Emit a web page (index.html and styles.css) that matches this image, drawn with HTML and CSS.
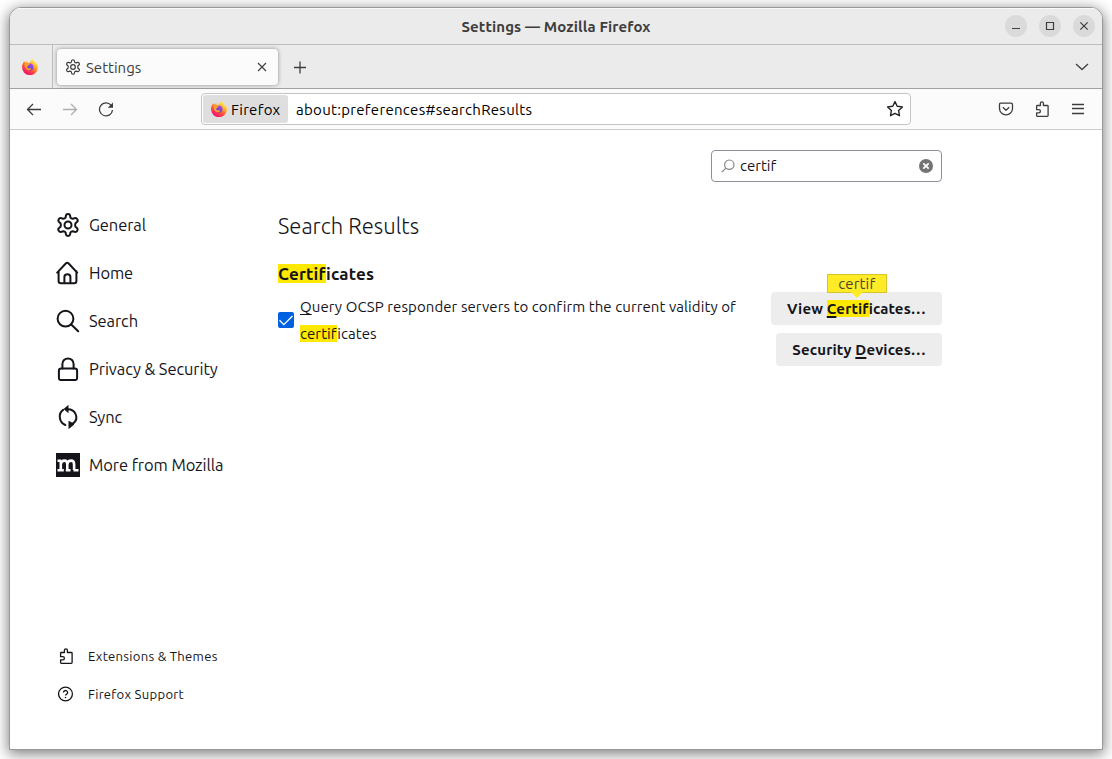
FILE: index.html
```html
<!DOCTYPE html>
<html lang="en">
<head>
<meta charset="utf-8">
<title>Settings</title>
<link rel="stylesheet" href="styles.css">
</head>
<body>
<svg class="defs" width="0" height="0">
  <defs>
    <linearGradient id="flame" x1="0.85" y1="0.05" x2="0.25" y2="1">
      <stop offset="0.05" stop-color="#fff44f"/><stop offset="0.35" stop-color="#ffb12c"/><stop offset="0.6" stop-color="#ff5634"/><stop offset="0.9" stop-color="#f5156c"/>
    </linearGradient>
    <linearGradient id="globe" x1="0.8" y1="0" x2="0.3" y2="1">
      <stop offset="0" stop-color="#b24cf0"/><stop offset="1" stop-color="#4b3fd0"/>
    </linearGradient>
    <symbol id="firefox" viewBox="0 0 16 16">
      <path fill="url(#flame)" d="M15.4 5.6c-.35-.85-1.05-1.75-1.6-2.05.45.9.7 1.75.8 2.4C13.7 3.7 12.1 2.8 10.9.8 10.6.4 10.6.2 10.5 0 9 .9 8.2 2.5 8.1 3.4c-1 .05-1.5.3-2.1.6C5.2 3.5 5.2 2.6 5.3 2.1 4.5 2.500 3.900 3.100 3.500 3.600 3.100 3.500 2.700 3.300 2.300 2.100 1.700 2.800 1.200 3.500.9 4.400.2 5.600.1 7 .1 8a7.900 7.900 0 0 0 15.800.600c.1-1.100-.1-2.200-.5-3z"/>
      <circle cx="8" cy="7.900" r="3.500" fill="url(#globe)"/>
      <path fill="#ff9f2e" d="M2.300 4.800c1-.900 2.800-1 3.800-.2.800 0 1.800.1 2 .5-.1.500-1.200.700-1.600 1-.3.300 0 1-.9 1.200-.6.500-.5 1.200.1 1.700 1.300 1 2.500 0 3.500.3.300.2.200.6-.2.900-1.100 1.300-3.600 1.400-4.800-.1C3 8.800 2.300 6.500 2.300 4.800z"/>
    </symbol>
    <symbol id="gear" viewBox="0 0 24 24">
      <g fill="none" stroke="currentColor" stroke-linejoin="round">
        <circle cx="12" cy="12" r="3.500"/>
        <path d="M9.900 2.600Q10.100 1.100 12 1.100T14.100 2.600L14.400 4.500Q15.200 5.900 16.800 5.800L18.700 5.100Q20.300 4.600 21.300 6.300T21 8.900L19.500 10.200Q18.700 12 19.500 13.800L21 15.100Q22.200 16.100 21.300 17.700T18.700 18.900L16.800 18.200Q15.200 18.100 14.400 19.500L14.100 21.400Q13.900 22.900 12 22.900T9.900 21.400L9.600 19.500Q8.800 18.100 7.200 18.200L5.300 18.900Q3.700 19.400 2.700 17.700T3 15.100L4.500 13.800Q5.300 12 4.500 10.200L3 8.900Q1.800 7.900 2.700 6.300T5.300 5.100L7.200 5.800Q8.800 5.900 9.600 4.500Z"/>
      </g>
    </symbol>
    <symbol id="puzzle" viewBox="0 0 16 16">
      <path fill="none" stroke="currentColor" stroke-width="1.300" stroke-linejoin="round" d="M2.600 7V5.300q0-.8.800-.8h3V2.300a1.500 1.500 0 0 1 3 0v2.200h3.900q.8 0 .8.800v9.200q0 .8-.8.800H3.400q-.8 0-.8-.8v-2.600h2.200a1.450 1.450 0 0 0 0-3.200H2.600z"/>
    </symbol>
  </defs>
</svg>

<div class="window">
  <header class="titlebar">
    <div class="title">Settings — Mozilla Firefox</div>
    <div class="controls">
      <span class="control"><svg width="22" height="22" viewBox="0 0 22 22"><path d="M7 13.500h8"/></svg></span>
      <span class="control"><svg width="22" height="22" viewBox="0 0 22 22"><path d="M7.500 7.500h7v7h-7z"/></svg></span>
      <span class="control"><svg width="22" height="22" viewBox="0 0 22 22"><path d="M7.300 7.300l7.400 7.400M14.700 7.300l-7.400 7.400"/></svg></span>
    </div>
  </header>

  <nav class="tabs">
    <div class="pinned"><svg width="16" height="16"><use href="#firefox"/></svg></div>
    <div class="tab">
      <svg class="tab-gear" width="16" height="16"><use href="#gear"/></svg>
      <span class="tab-label">Settings</span>
      <svg class="line thin" width="10" height="10" viewBox="0 0 10 10"><path d="M1 1l8 8M9 1L1 9"/></svg>
    </div>
    <svg class="line new-tab" width="14" height="14" viewBox="0 0 14 14"><path d="M1 7.500h12M7 1.500v12"/></svg>
    <svg class="line all-tabs" width="14" height="8" viewBox="0 0 14 8"><path d="M1 1l6 5.500L13 1"/></svg>
  </nav>

  <div class="toolbar">
    <div class="history">
      <svg class="line" width="16" height="16" viewBox="0 0 16 16"><path d="M15 8.500H1.500M7 3L1.500 8.500 7 14"/></svg>
      <svg class="line faded" width="16" height="16" viewBox="0 0 16 16"><path d="M1 8.500h13.500M9 3l5.500 5.500L9 14"/></svg>
      <svg class="line reload" width="16" height="16" viewBox="0 0 16 16"><path d="M13 4.200A6.500 6.500 0 1 0 14.500 9"/><path class="solid" d="M15 1.500v5.300H9.700z"/></svg>
    </div>
    <div class="urlbar">
      <span class="identity"><svg width="16" height="16"><use href="#firefox"/></svg><span class="identity-label">Firefox</span></span>
      <span class="url">about:preferences#searchResults</span>
      <svg class="line star" width="18" height="18" viewBox="0 0 18 18"><path d="M9 1.600l2.200 4.600 5.200.7-3.800 3.600.9 5.200L9 13.300l-4.500 2.400.9-5.200L1.600 6.900l5.200-.7z"/></svg>
    </div>
    <div class="actions">
      <svg class="line" width="16" height="16" viewBox="0 0 16 16"><path d="M2.800 2.200h10.400q1.300 0 1.300 1.300v4a6.500 6.300 0 0 1-13 0v-4q0-1.300 1.300-1.300zM4.800 6.300L8 9.300l3.200-3"/></svg>
      <svg width="16" height="16"><use href="#puzzle"/></svg>
      <svg class="line" width="14" height="14" viewBox="0 0 14 14"><path d="M1 2.500h12M1 6.500h12M1 11.500h12"/></svg>
    </div>
  </div>

  <div class="page">
    <aside class="sidebar">
      <ul class="categories">
        <li><svg class="icon gear" width="24" height="24"><use href="#gear"/></svg>General</li>
        <li><svg class="icon" width="24" height="24" viewBox="0 0 24 24"><path d="M1.200 11.600L10 2.300q1.200-1 2.400 0l8.800 9.300M2.600 10.300V20q0 2.300 2.300 2.300h13.200q2.300 0 2.300-2.300v-9.700M8.400 22v-6q0-2.700 3-2.700t3 2.700v6"/></svg>Home</li>
        <li><svg class="icon" width="24" height="24" viewBox="0 0 24 24"><circle cx="9.500" cy="9.700" r="7.900"/><path d="M15.200 15.500l7 6.800"/></svg>Search</li>
        <li><svg class="icon" width="24" height="24" viewBox="0 0 24 24"><rect x="2.900" y="11.500" width="18.200" height="11.600" rx="2.200"/><path d="M6.400 11.500V7a5.600 5.600 0 0 1 11.200 0v4.500"/></svg>Privacy &amp; Security</li>
        <li><svg class="icon" width="24" height="24" viewBox="0 0 24 24"><path d="M7.200 4.800c-5.200 3.500-4.500 12.500 2.100 15.200M11 4.200c9.300-.4 12 9.800 6.300 14"/><path class="solid" d="M12.500-.2v8.400L7.600 4zM12.500 15.800v8.400l5.200-4.200 1-2.400-2.700-.2z"/></svg>Sync</li>
        <li><svg class="mozilla" width="24" height="24" viewBox="0 0 24 24"><path class="tile" d="M0 0h24v24H0z"/><path class="mark" d="M1.500 7.700h3.700M1.500 17.200h6.300M4.800 17V7.200M4.800 11.200q.4-3.600 3.700-3.600 2.800 0 2.800 3.600V17M9.800 17.200h4.700M11.300 11.200q.4-3.600 3.700-3.600 3.100 0 3.100 3.600V17M17.500 17.200h5"/></svg>More from Mozilla</li>
      </ul>
      <ul class="links">
        <li><svg width="16" height="16"><use href="#puzzle"/></svg>Extensions &amp; Themes</li>
        <li><svg class="help" width="16" height="16" viewBox="0 0 16 16"><circle cx="7.500" cy="8" r="6.900"/><path d="M5.400 6.500a2.100 2 0 1 1 3.400 1.600q-1.300.7-1.300 1.500"/><circle class="dot" cx="7.500" cy="11.500" r=".8"/></svg>Firefox Support</li>
      </ul>
    </aside>

    <main class="pane">
      <div class="search">
        <svg class="glass" width="14" height="14" viewBox="0 0 14 14"><circle cx="8.300" cy="5.700" r="4.700"/><path d="M4.900 9.100L.8 13.200"/></svg>
        <span class="query">certif</span>
        <svg class="clear" width="14" height="14" viewBox="0 0 14 14"><circle cx="7" cy="7" r="7"/><path d="M4.300 4.300l5.400 5.400M9.700 4.300L4.300 9.700"/></svg>
      </div>
      <h1 class="heading">Search Results</h1>
      <h2 class="group-title"><mark>Certif</mark>icates</h2>
      <div class="group">
        <div class="option">
          <span class="checkbox"><svg width="16" height="16" viewBox="0 0 16 16"><path d="M1.500 8.300l4.300 4.300L14.500 4"/></svg></span>
          <p class="option-text"><u>Q</u>uery OCSP responder servers to confirm the current validity of <mark>certif</mark>icates</p>
        </div>
        <div class="buttons">
          <div class="button">View <span class="hit"><mark><u>C</u>ertif</mark><span class="tooltip">certif</span></span>icates…</div>
          <div class="button">Security <u>D</u>evices…</div>
        </div>
      </div>
    </main>
  </div>
</div>
</body>
</html>
```
FILE: styles.css
```css
* { box-sizing: border-box; }
html, body { height: 100%; }
body {
  margin: 0;
  padding: 7px 9px 9px;
  overflow: hidden;
  background: #fff;
  color: #15141a;
  font: 15px/20px Ubuntu, "Noto Sans", sans-serif;
  font-variant-ligatures: none;
}
.defs { position: absolute; }
svg { display: block; flex: none; }
ul { margin: 0; padding: 0; list-style: none; }
u { text-underline-offset: 2px; text-decoration-thickness: 1px; text-decoration-skip-ink: none; }
mark { background: #ffe900; color: inherit; }

.window {
  display: flex;
  flex-direction: column;
  width: 1094px;
  height: 743px;
  overflow: hidden;
  border: 1px solid #989898;
  border-radius: 12px 12px 0 0;
  background: #fff;
  box-shadow: 0 3px 14px 1px rgba(0, 0, 0, .5);
}

.titlebar {
  display: grid;
  grid-template-columns: 1fr auto 1fr;
  align-items: center;
  flex: none;
  height: 37px;
  border-bottom: 1px solid #bdbdbd;
  background: #ebebeb;
  box-shadow: inset 0 1px #fafafa;
}
.title { grid-column: 2; padding-top: 2px; color: #3d3d3d; font-weight: 700; letter-spacing: .12px; }
.controls { display: flex; justify-content: flex-end; gap: 12px; padding-right: 7px; }
.control { width: 22px; height: 22px; border-radius: 50%; background: #dadada; }
.control path { fill: none; stroke: #3d3d3d; stroke-width: 1.2; }

.tabs {
  display: flex;
  align-items: center;
  flex: none;
  height: 44px;
  padding-right: 13px;
  border-bottom: 1px solid #a1a1a1;
  background: #ebebeb;
}
.pinned {
  display: flex;
  align-items: center;
  justify-content: center;
  width: 43px;
  height: 43px;
  padding-right: 3px;
  border-right: 1px solid #bdbdbd;
}
.tab {
  display: flex;
  align-items: center;
  width: 221px;
  height: 36px;
  margin-left: 4px;
  padding: 0 11px 0 8px;
  border-radius: 4px;
  background: #fbfbfb;
  box-shadow: 0 0 4px rgba(0, 0, 0, .4);
}
.tab-gear { margin-right: 5px; color: #3d3d3d; stroke-width: 1.8px; }
.tab-label { flex: 1; padding-top: 2px; color: #3d3d3d; }
.line { fill: none; stroke: #3d3d3d; stroke-width: 1.3; stroke-linejoin: round; }
.thin { stroke-width: 1.1; }
.solid { fill: currentColor; stroke: none; }
.new-tab { margin-left: 15px; }
.all-tabs { margin-left: auto; }

.toolbar {
  display: flex;
  align-items: center;
  flex: none;
  height: 41px;
  padding: 0 17px 0 16px;
  border-bottom: 1px solid #ccc;
  background: #fbfbfb;
  color: #3d3d3d;
}
.history { display: flex; gap: 20px; width: 175px; }
.faded { opacity: .4; }
.urlbar {
  display: flex;
  align-items: center;
  width: 710px;
  height: 32px;
  padding: 0 6px 0 1px;
  border: 1px solid #c4c4c4;
  border-radius: 4px;
  background: #fff;
  color: #000;
  letter-spacing: .3px;
}
.identity {
  display: flex;
  align-items: center;
  gap: 4px;
  width: 85px;
  height: 28px;
  padding-left: 8px;
  border-radius: 3px;
  background: #dedede;
}
.identity-label { padding-top: 2px; }
.url { flex: 1; padding: 2px 0 0 8px; }
.star { stroke: #222; stroke-width: 1.4; }
.actions { display: flex; align-items: center; gap: 21px; margin-left: auto; }
.actions svg:first-child { margin-right: -1px; }

.page { display: flex; flex: 1; min-height: 0; }
.sidebar {
  display: flex;
  flex-direction: column;
  justify-content: space-between;
  width: 268px;
  padding: 71px 0 36px 46px;
}
.categories li {
  display: flex;
  align-items: center;
  gap: 9px;
  height: 48px;
  font-size: 16.5px;
  letter-spacing: -.09px;
}
.icon { fill: none; stroke: #15141a; stroke-width: 2; stroke-linecap: round; stroke-linejoin: round; }
.icon .solid { stroke: none; }
.tile { fill: #15141a; }
.mark { fill: none; stroke: #fff; stroke-width: 2.6; }
.links li {
  display: flex;
  align-items: center;
  gap: 14px;
  height: 38px;
  padding-left: 2px;
  font-size: 13.1px;
  letter-spacing: .28px;
}
.help { fill: none; stroke: #15141a; stroke-width: 1.3; }
.dot { fill: #15141a; stroke: none; }

.pane { width: 664px; padding-top: 20px; }
.search {
  display: flex;
  align-items: center;
  width: 231px;
  height: 32px;
  margin-left: auto;
  padding: 0 8px 0 9px;
  border: 1px solid #8f8f9d;
  border-radius: 4px;
}
.glass { fill: none; stroke: #85858b; stroke-width: 1.2; }
.query { flex: 1; padding-left: 5px; }
.clear { fill: #737373; }
.clear path { stroke: #fff; stroke-width: 1.8; }
.heading { margin: 29px 0 0; font-size: 22px; font-weight: 300; line-height: 30px; }
.group-title { margin: 22px 0 0; font-size: 17px; font-weight: 700; line-height: 22px; letter-spacing: .2px; }
.group { display: flex; justify-content: space-between; }
.option { display: flex; align-items: center; gap: 6px; height: 54px; margin-top: 8px; }
.checkbox { flex: none; width: 16px; height: 16px; border-radius: 2px; background: #0061e0; }
.checkbox path { fill: none; stroke: #fff; stroke-width: 1.3; }
.option-text { width: 450px; margin: 0; line-height: 27px; letter-spacing: .08px; }
.buttons { display: flex; flex-direction: column; align-items: flex-end; gap: 8px; padding-top: 7px; }
.button {
  height: 33px;
  padding: 0 16px;
  border-radius: 4px;
  background: #ededed;
  font-weight: 700;
  line-height: 33px;
  letter-spacing: .14px;
  white-space: nowrap;
}
.button u { text-decoration-thickness: 2px; }
.hit { position: relative; }
.tooltip {
  position: absolute;
  bottom: 24px;
  left: 0;
  width: 60px;
  height: 19px;
  border: 1px solid #d9c32b;
  background: #ffeb26;
  color: #4a4632;
  font-weight: 400;
  line-height: 18px;
  text-align: center;
}
.tooltip { bottom: auto; top: -26px; }
.tooltip::after {
  content: "";
  position: absolute;
  top: 17px;
  left: 23px;
  border: 6px solid transparent;
  border-top-color: #ffeb26;
  border-bottom: 0;
}
```
